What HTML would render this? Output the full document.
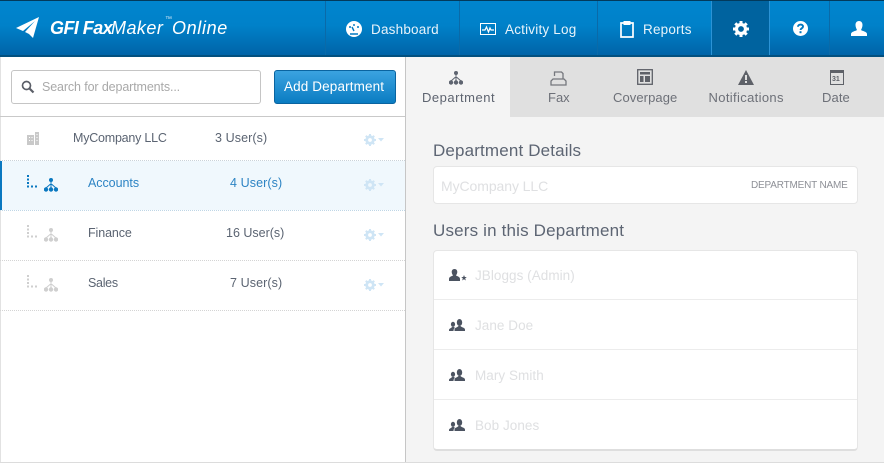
<!DOCTYPE html>
<html><head><meta charset="utf-8">
<style>
html,body{margin:0;padding:0;background:#fff}
#r{position:relative;width:884px;height:463px;overflow:hidden;background:#fff;font-family:"Liberation Sans",sans-serif;font-size:13px;color:#5b6472}
.a{position:absolute}
.t{position:absolute;white-space:nowrap;line-height:16px;letter-spacing:.42px}
svg{position:absolute;display:block}
.sep{position:absolute;top:1px;width:1px;height:54px;background:#0a6aa8}
.nt{color:#e8f3fa;font-size:13.5px;letter-spacing:.2px;top:22px}
.tab{font-size:13px;letter-spacing:.2px;color:#6d7078;top:90px}
.dot{position:absolute;left:0;width:405px;height:0;border-top:1px dotted #d4d4d4}
.u{color:#dfe0e2;font-size:13.5px;left:475px;letter-spacing:.05px}
.ln{position:absolute;left:434px;width:423px;height:1px;background:#ececec}
.h{font-size:17px;color:#5d6573;letter-spacing:.15px;line-height:20px}
</style></head><body><div id="r">

<div class="a" style="left:0;top:0;width:884px;height:57px;background:linear-gradient(#0085ce 0,#0081c9 45%,#0064a8 100%);border-top:1px solid #023a5c;border-bottom:2px solid #02507f;box-sizing:border-box"></div>
<div class="a" style="left:711px;top:1px;width:59px;height:54px;background:#00639f;border-right:1px solid #2b93d6;border-left:1px solid #2b93d6;box-sizing:border-box"></div>
<div class="sep" style="left:325px"></div><div class="sep" style="left:459px"></div><div class="sep" style="left:597px"></div><div class="sep" style="left:829px"></div>

<svg style="left:15px;top:16px" width="25" height="24" viewBox="0 0 25 24"><path d="M24 1 1 12l7 3L20 5 10 16l0 0 4 2 3 3 1 1z" fill="#fff"/></svg>
<div class="t" style="left:50px;top:18px;font-size:18px;line-height:20px;color:#fff;font-style:italic;font-weight:bold;letter-spacing:-.55px">GFI Fax</div>
<div class="t" style="left:111px;top:18px;font-size:18px;line-height:20px;color:#fff;font-style:italic;letter-spacing:.45px">Maker</div>
<div class="t" style="left:165px;top:16px;font-size:7px;line-height:8px;color:#cfe6f5;letter-spacing:0">&#8482;</div>
<div class="t" style="left:172px;top:18px;font-size:18px;line-height:20px;color:#fff;font-style:italic;letter-spacing:.65px">Online</div>

<svg style="left:346px;top:21px" width="16" height="16" viewBox="0 0 16 16"><circle cx="8" cy="8" r="8" fill="#fff"/><path d="M3 6h2M8 3v2M13 6h-2M8 10 6 6" stroke="#0078c0" stroke-width="1.400" fill="none"/><path d="M4 13h8" stroke="#0078c0" stroke-width="1.500"/></svg>
<div class="t nt" style="left:371px">Dashboard</div>
<svg style="left:480px;top:23px" width="16" height="13" viewBox="0 0 16 13"><rect x=".5" y=".5" width="15" height="11" fill="none" stroke="#fff"/><path d="M2 7h3l1.500-3 2 5 1.500-4 1 2h3" fill="none" stroke="#fff" stroke-width="1.200"/></svg>
<div class="t nt" style="left:505px">Activity Log</div>
<svg style="left:620px;top:20px" width="14" height="18" viewBox="0 0 14 18"><path d="M1 3h12v14H1z" fill="none" stroke="#fff" stroke-width="1.700"/><rect x="3.500" y="1" width="7" height="4" fill="#fff"/></svg>
<div class="t nt" style="left:643px">Reports</div>
<svg style="left:733px;top:21px" width="16" height="16" viewBox="0 0 16 16"><circle cx="8" cy="8" r="4.500" fill="none" stroke="#fff" stroke-width="3.200"/><path d="M8 0v3M8 13v3M0 8h3M13 8h3M2.300 2.300l2.200 2.200M11.500 11.500l2.200 2.200M13.700 2.300l-2.200 2.200M4.500 11.500l-2.200 2.200" stroke="#fff" stroke-width="3"/></svg>
<svg style="left:793px;top:21px" width="15" height="15" viewBox="0 0 15 15"><circle cx="7.500" cy="7.500" r="7.500" fill="#fff"/><path d="M5 5.800C5 2.800 10 2.800 10 5.600 10 7.300 7.500 7.300 7.500 9" fill="none" stroke="#0078bf" stroke-width="1.900"/><rect x="6.500" y="10.200" width="2" height="2" fill="#0078bf"/></svg>
<svg style="left:851px;top:21px" width="16" height="15" viewBox="0 0 16 15"><path d="M8 0c2.500 0 3.500 2 3.500 4S10.500 8 10 9c1 1 6 1.500 6 4v2H0v-2c0-2.500 5-3 6-4-.5-1-1.500-3-1.500-5S5.500 0 8 0z" fill="#fff"/></svg>

<!-- left -->
<div class="a" style="left:405px;top:57px;width:1px;height:406px;background:#c6c6c6"></div>
<div class="a" style="left:0;top:57px;width:1px;height:406px;background:#e2e2e2"></div>
<div class="a" style="left:0;top:116px;width:405px;height:1px;background:#c9c9c9"></div>
<div class="a" style="left:0;top:462px;width:884px;height:1px;background:#dcdcdc"></div>

<div class="a" style="left:11px;top:70px;width:250px;height:34px;box-sizing:border-box;border:1px solid #c5c5c5;border-radius:3px"></div>
<svg style="left:21px;top:80px" width="14" height="14" viewBox="0 0 14 14"><circle cx="5.500" cy="5.500" r="4" fill="none" stroke="#5b5f68" stroke-width="1.700"/><path d="M8.500 8.500l4 4" stroke="#5b5f68" stroke-width="2.200"/></svg>
<div class="t" style="left:42px;top:79px;font-size:12.500px;color:#a9a9a9;letter-spacing:-.12px">Search for departments...</div>
<div class="a" style="left:274px;top:70px;width:122px;height:34px;box-sizing:border-box;border:1px solid #0a64a0;border-radius:3px;background:linear-gradient(#3ba3e0,#0a7cc2)"></div>
<div class="t" style="left:284px;top:79px;font-size:13.500px;color:#fff;letter-spacing:.13px">Add Department</div>

<div class="a" style="left:0;top:161px;width:405px;height:49px;background:#f0f8fd"></div>
<div class="a" style="left:0;top:161px;width:2px;height:49px;background:#0a78c0"></div>
<div class="dot" style="top:160px;border-color:#c9d3da"></div><div class="dot" style="top:210px;border-color:#bfd6e6"></div><div class="dot" style="top:260px"></div><div class="dot" style="top:310px"></div>

<svg style="left:26px;top:131px" width="14" height="14" viewBox="0 0 14 14"><path d="M1 4h7v10H1zM9 1h4v13H9z" fill="#c9c9c9"/><path d="M3 6h1v1H3zM5.500 6h1v1h-1zM3 9h1v1H3zM5.500 9h1v1h-1zM10.500 3h1v1h-1zM10.500 6h1v1h-1zM10.500 9h1v1h-1z" fill="#fff"/></svg>
<div class="t" style="left:73px;top:130px;font-size:12.500px;letter-spacing:-.22px">MyCompany LLC</div>
<div class="t" style="left:215px;top:130px;font-size:12.500px;letter-spacing:.1px">3 User(s)</div>

<div class="t" style="left:88px;top:175px;font-size:12.500px;letter-spacing:-.05px;color:#2d84c4">Accounts</div>
<div class="t" style="left:230px;top:175px;font-size:12.500px;letter-spacing:.1px;color:#2d84c4">4 User(s)</div>
<div class="t" style="left:88px;top:225px;font-size:12.500px;letter-spacing:-.1px">Finance</div>
<div class="t" style="left:226px;top:225px;font-size:12.500px;letter-spacing:0">16 User(s)</div>
<div class="t" style="left:88px;top:275px;font-size:12.500px;letter-spacing:-.3px">Sales</div>
<div class="t" style="left:230px;top:275px;font-size:12.500px;letter-spacing:.1px">7 User(s)</div>

<svg width="0" height="0" style="left:0;top:0"><defs>
<g id="org"><circle cx="7" cy="2" r="2"/><circle cx="2" cy="11.500" r="2.200"/><circle cx="7" cy="11.500" r="2.200"/><circle cx="12" cy="11.500" r="2.200"/><path d="M7 3v8M2 10 6 6.500h2l4 3.500" fill="none" stroke="currentColor" stroke-width="1"/></g>
<g id="dots"><path d="M0 0h2v2H0zM0 3.500h2v2H0zM0 7h2v2H0zM0 10.500h2v2H0zM4 10.500h2v2H4zM8 10.500h2v2H8z"/></g>
<g id="gear"><circle cx="6" cy="6" r="3.300" fill="none" stroke="#cfe5f5" stroke-width="2.800"/><path d="M6 0v2.500M6 9.500V12M0 6h2.500M9.500 6H12M1.800 1.800l1.800 1.800M8.400 8.400l1.800 1.800M10.200 1.800 8.400 3.600M3.600 8.400l-1.800 1.800" stroke="#cfe5f5" stroke-width="2"/><path d="M14 4h6l-3 3.500z" fill="#cfe5f5"/></g>
<g id="two"><ellipse cx="4" cy="5.300" rx="2.100" ry="2.600"/><path d="M0 12v-1c0-1.500 2-1.600 3-3h2l1 1c-1 .5-1.500 1.200-1.500 3z"/><ellipse cx="10.500" cy="3.500" rx="2.700" ry="3.500"/><path d="M5.500 12v-1.500c0-2 3-2 4-3.500h2c1 1.500 4.500 1.500 4.500 3.500V12z"/></g>
</defs></svg>

<svg style="left:27px;top:175px;color:#0a78c0;fill:#0a78c0" width="10" height="13"><use href="#dots"/></svg>
<svg style="left:44px;top:178px;color:#0a78c0;fill:#0a78c0" width="14" height="14"><use href="#org"/></svg>
<svg style="left:27px;top:225px;fill:#cfcfcf" width="10" height="13"><use href="#dots"/></svg>
<svg style="left:44px;top:228px;color:#cfcfcf;fill:#cfcfcf" width="14" height="14"><use href="#org"/></svg>
<svg style="left:27px;top:275px;fill:#cfcfcf" width="10" height="13"><use href="#dots"/></svg>
<svg style="left:44px;top:278px;color:#cfcfcf;fill:#cfcfcf" width="14" height="14"><use href="#org"/></svg>

<svg style="left:364px;top:134px" width="20" height="12"><use href="#gear"/></svg>
<svg style="left:364px;top:179px" width="20" height="12"><use href="#gear"/></svg>
<svg style="left:364px;top:229px" width="20" height="12"><use href="#gear"/></svg>
<svg style="left:364px;top:279px" width="20" height="12"><use href="#gear"/></svg>

<!-- right -->
<div class="a" style="left:406px;top:57px;width:478px;height:405px;background:#f4f4f4"></div>
<div class="a" style="left:510px;top:57px;width:374px;height:60px;background:#e0e0e0"></div>

<svg style="left:449px;top:71px;color:#5e6470;fill:#5e6470" width="14" height="14"><use href="#org"/></svg>
<div class="t tab" style="left:422px;color:#5e6470;letter-spacing:.52px">Department</div>
<svg style="left:550px;top:71px" width="17" height="15" viewBox="0 0 17 15"><path d="M4.500 5V1h7l1.500 1.500V8M1 14V10l2-2h11l2 2v4z" fill="none" stroke="#75777d" stroke-width="1.300"/></svg>
<div class="t tab" style="left:548px;letter-spacing:0">Fax</div>
<svg style="left:637px;top:69px" width="16" height="16" viewBox="0 0 16 16"><rect x=".7" y=".7" width="14.600" height="14.600" fill="none" stroke="#5e6168" stroke-width="1.300"/><path d="M3 3h10v2.500H3zM3 7h3.500v6H3zM8 7h5v6H8z" fill="#5e6168"/></svg>
<div class="t tab" style="left:613px;letter-spacing:.08px">Coverpage</div>
<svg style="left:738px;top:70px" width="16" height="15" viewBox="0 0 16 15"><path d="M8 0l8 15H0z" fill="#5e6168"/><rect x="7" y="5" width="2" height="5" fill="#e0e0e0"/><rect x="7" y="11" width="2" height="2" fill="#e0e0e0"/></svg>
<div class="t tab" style="left:708.500px;letter-spacing:.35px">Notifications</div>
<svg style="left:830px;top:69px" width="14" height="16" viewBox="0 0 14 16"><rect x=".5" y="1.500" width="13" height="14" fill="none" stroke="#5e6168"/><path d="M1 1h12v3H1z" fill="#5e6168"/></svg>
<div class="t" style="left:832px;top:75px;font-size:7px;line-height:9px;font-weight:bold;color:#5e6168;letter-spacing:0">31</div>
<div class="t tab" style="left:822px;letter-spacing:.1px">Date</div>

<div class="t h" style="left:433px;top:141px">Department Details</div>
<div class="a" style="left:433px;top:166px;width:425px;height:38px;box-sizing:border-box;background:#fff;border:1px solid #e6e6e6;border-radius:4px"></div>
<div class="t u" style="left:441px;top:178px;letter-spacing:-.08px;font-size:14px">MyCompany LLC</div>
<div class="t" style="left:751px;top:178px;font-size:10px;color:#8d8f96;letter-spacing:-.19px">DEPARTMENT NAME</div>

<div class="t h" style="left:433px;top:221px;letter-spacing:.17px">Users in this Department</div>
<div class="a" style="left:433px;top:250px;width:425px;height:201px;box-sizing:border-box;background:#fff;border:1px solid #e6e6e6;border-bottom:2px solid #dedede;border-radius:4px"></div>
<div class="ln" style="top:299px"></div><div class="ln" style="top:349px"></div><div class="ln" style="top:399px"></div>

<svg style="left:449px;top:269px" width="18" height="13" viewBox="0 0 18 13" fill="#4b5361"><path d="M5.500 0c2 0 2.800 1.500 2.800 3S7.500 5.500 7 6.500c1 .7 4 1 4 3.500v2H0v-2c0-2.500 3-2.800 4-3.500C3.500 5.500 2.700 4.500 2.700 3S3.500 0 5.500 0z"/><path d="M15 6l.8 2h2l-1.600 1.300.6 2.200-1.800-1.300-1.800 1.300.6-2.200L12.200 8h2z"/></svg>
<div class="t u" style="top:268px">JBloggs (Admin)</div>
<svg style="left:449px;top:319px;fill:#4b5361" width="16" height="12"><use href="#two"/></svg>
<div class="t u" style="top:318px">Jane Doe</div>
<svg style="left:449px;top:369px;fill:#4b5361" width="16" height="12"><use href="#two"/></svg>
<div class="t u" style="top:368px">Mary Smith</div>
<svg style="left:449px;top:419px;fill:#4b5361" width="16" height="12"><use href="#two"/></svg>
<div class="t u" style="top:418px">Bob Jones</div>

</div></body></html>
